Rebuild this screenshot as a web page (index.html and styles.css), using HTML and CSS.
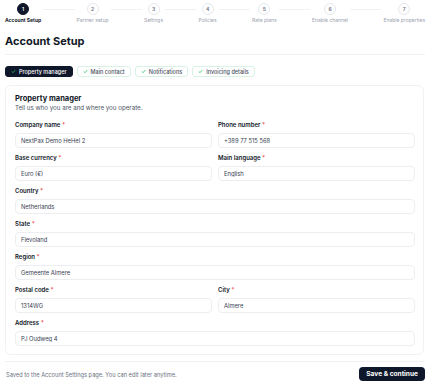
FILE: index.html
```html
<!DOCTYPE html>
<html lang="en">
  <head>
    <meta charset="UTF-8" />
    <meta name="viewport" content="width=device-width, initial-scale=1.0" />
    <title>Account Setup</title>
    <link rel="stylesheet" href="styles.css">
  </head>
  <body>
    <div class="page">
      <ol class="stepper">
        <li class="step active"><span class="dot">1</span><span class="step-label">Account Setup</span></li>
        <li class="line"></li>
        <li class="step"><span class="dot">2</span><span class="step-label">Partner setup</span></li>
        <li class="line"></li>
        <li class="step"><span class="dot">3</span><span class="step-label">Settings</span></li>
        <li class="line"></li>
        <li class="step"><span class="dot">4</span><span class="step-label">Policies</span></li>
        <li class="line"></li>
        <li class="step"><span class="dot">5</span><span class="step-label">Rate plans</span></li>
        <li class="line"></li>
        <li class="step"><span class="dot">6</span><span class="step-label">Enable channel</span></li>
        <li class="line"></li>
        <li class="step"><span class="dot">7</span><span class="step-label">Enable properties</span></li>
      </ol>

      <h1 class="title">Account Setup</h1>

      <div class="tabs">
        <button class="tab current">
          <svg class="check" viewBox="0 0 10 10"><polyline points="2,5.3 4.2,7.4 8,2.8" /></svg>
          Property manager
        </button>
        <button class="tab">
          <svg class="check" viewBox="0 0 10 10"><polyline points="2,5.3 4.2,7.4 8,2.8" /></svg>
          Main contact
        </button>
        <button class="tab">
          <svg class="check" viewBox="0 0 10 10"><polyline points="2,5.3 4.2,7.4 8,2.8" /></svg>
          Notifications
        </button>
        <button class="tab">
          <svg class="check" viewBox="0 0 10 10"><polyline points="2,5.3 4.2,7.4 8,2.8" /></svg>
          Invoicing details
        </button>
      </div>

      <form class="card">
        <h2>Property manager</h2>
        <p class="sub">Tell us who you are and where you operate.</p>

        <div class="fields">
          <label class="field">
            <span class="label">Company name <i>*</i></span>
            <input type="text" value="NextPax Demo HeHel 2" />
          </label>
          <label class="field">
            <span class="label">Phone number <i>*</i></span>
            <input type="text" value="+389 77 515 568" />
          </label>
          <label class="field">
            <span class="label">Base currency <i>*</i></span>
            <input type="text" value="Euro (€)" />
          </label>
          <label class="field">
            <span class="label">Main language <i>*</i></span>
            <input type="text" value="English" />
          </label>
          <label class="field wide">
            <span class="label">Country <i>*</i></span>
            <input type="text" value="Netherlands" />
          </label>
          <label class="field wide">
            <span class="label">State <i>*</i></span>
            <input type="text" value="Flevoland" />
          </label>
          <label class="field wide">
            <span class="label">Region <i>*</i></span>
            <input type="text" value="Gemeente Almere" />
          </label>
          <label class="field">
            <span class="label">Postal code <i>*</i></span>
            <input type="text" value="1314WG" />
          </label>
          <label class="field">
            <span class="label">City <i>*</i></span>
            <input type="text" value="Almere" />
          </label>
          <label class="field wide">
            <span class="label">Address <i>*</i></span>
            <input type="text" value="PJ Oudweg 4" />
          </label>
        </div>
      </form>

      <div class="footer">
        <p>Saved to the Account Settings page. You can edit later anytime.</p>
        <button class="save">Save &amp; continue</button>
      </div>
    </div>
  </body>
</html>
```

FILE: styles.css
```css
* {
  margin: 0;
  padding: 0;
  box-sizing: border-box;
}
body {
  background: #fff;
  font-family: Inter, "Noto Sans", sans-serif;
  color: #111827;
}
.page {
  width: 420px;
  margin-left: 5px;
}

/* stepper */
.stepper {
  list-style: none;
  display: flex;
  align-items: flex-start;
  padding-top: 3px;
}
.step {
  display: flex;
  flex-direction: column;
  align-items: center;
  gap: 2px;
}
.dot {
  width: 12px;
  height: 12px;
  border-radius: 50%;
  border: 1px solid #e5e7eb;
  display: flex;
  align-items: center;
  justify-content: center;
  font-size: 5px;
  font-weight: 600;
  color: #6b7280;
  background: #fff;
}
.step-label {
  font-size: 5px;
  line-height: 7px;
  color: #9ca3af;
  white-space: nowrap;
}
.step.active .dot {
  background: #0f172a;
  border-color: #0f172a;
  color: #fff;
}
.step.active .step-label {
  color: #111827;
  font-weight: 700;
}
.line {
  flex: 1;
  height: 1px;
  background: #f0f1f3;
  margin: 6px 2px 0;
}

.title {
  font-size: 11px;
  font-weight: 700;
  line-height: 16px;
  margin-top: 9px;
  padding-bottom: 5px;
  border-bottom: 1px solid #f1f2f4;
}

/* tabs */
.tabs {
  display: flex;
  gap: 4px;
  margin-top: 11px;
}
.tab {
  display: flex;
  align-items: center;
  gap: 3px;
  height: 11px;
  padding: 0 5px;
  font-family: inherit;
  font-size: 5.5px;
  font-weight: 500;
  color: #4b5563;
  background: #fff;
  border: 1px solid #d8f3e6;
  border-radius: 3px;
}
.tab.current {
  background: #0f172a;
  border-color: #0f172a;
  color: #fff;
}
.check {
  width: 5px;
  height: 5px;
  fill: none;
  stroke: #22c55e;
  stroke-width: 1.5;
  stroke-linecap: round;
  stroke-linejoin: round;
}

/* card */
.card {
  margin-top: 8px;
  border: 1px solid #f0f1f3;
  border-radius: 6px;
  padding: 8px 8px 8px 9px;
  width: 419px;
}
.card h2 {
  font-size: 7.5px;
  font-weight: 700;
  line-height: 10px;
}
.sub {
  font-size: 6.2px;
  line-height: 8px;
  color: #4b5563;
}
.fields {
  display: grid;
  grid-template-columns: 1fr 1fr;
  column-gap: 6px;
  row-gap: 6px;
  margin-top: 9px;
}
.field {
  display: flex;
  flex-direction: column;
  gap: 4px;
}
.field.wide {
  grid-column: 1 / 3;
}
.label {
  font-size: 6px;
  line-height: 8px;
  font-weight: 600;
  color: #111827;
}
.label i {
  font-style: normal;
  color: #ef4444;
}
.field input {
  height: 15px;
  border: 1px solid #eceef1;
  border-radius: 4px;
  padding: 0 5px;
  font-family: inherit;
  font-size: 5.8px;
  color: #374151;
  outline: none;
}

/* footer */
.footer {
  margin-top: 6px;
  border-top: 1px solid #f1f2f4;
  padding-top: 5px;
  display: flex;
  justify-content: space-between;
  align-items: center;
}
.footer p {
  font-size: 5.7px;
  color: #6b7280;
  margin-left: 1px;
}
.save {
  height: 14px;
  padding: 0 7px;
  border: none;
  border-radius: 4px;
  background: #0f172a;
  color: #fff;
  font-family: inherit;
  font-size: 6.6px;
  font-weight: 700;
}
```
